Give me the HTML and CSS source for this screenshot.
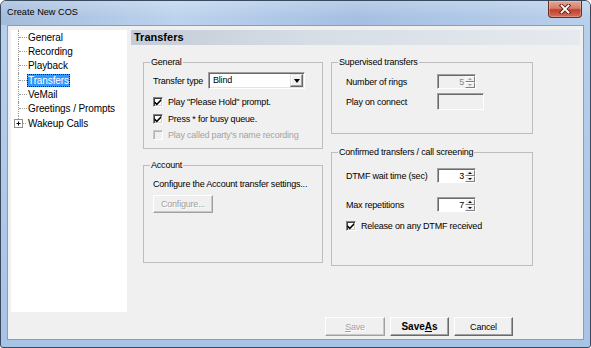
FILE: index.html
```html
<!DOCTYPE html>
<html>
<head>
<meta charset="utf-8">
<title>Create New COS</title>
<link rel="stylesheet" href="styles.css">
</head>
<body>
<div class="window">
  <div class="titlebar">
    <span class="title">Create New COS</span>
    <span class="close">
      <svg width="14" height="10" viewBox="0 0 14 10"><path d="M3.5 1.5 L10.5 8.5 M10.5 1.5 L3.5 8.5" stroke="#5a1f18" stroke-width="3.6" stroke-linecap="square"/><path d="M3.5 1.5 L10.5 8.5 M10.5 1.5 L3.5 8.5" stroke="#fff" stroke-width="1.8" stroke-linecap="square"/></svg>
    </span>
  </div>
  <div class="client">
    <div class="tree">
      <div class="node"><span class="conn"></span><span class="label">General</span></div>
      <div class="node"><span class="conn"></span><span class="label">Recording</span></div>
      <div class="node"><span class="conn"></span><span class="label">Playback</span></div>
      <div class="node"><span class="conn"></span><span class="label selected">Transfers</span></div>
      <div class="node"><span class="conn"></span><span class="label">VeMail</span></div>
      <div class="node"><span class="conn"></span><span class="label">Greetings / Prompts</span></div>
      <div class="node">
        <svg class="conn-last" width="16" height="14" viewBox="0 0 16 14">
          <path d="M7.5 0 V3" stroke="#a0a0a0" stroke-dasharray="1 1"/>
          <rect x="3.5" y="3.5" width="8" height="8" fill="#fff" stroke="#919191"/>
          <path d="M5.5 7.5 H9.5 M7.5 5.5 V9.5" stroke="#000"/>
          <path d="M12 7.5 H16" stroke="#a0a0a0" stroke-dasharray="1 1"/>
        </svg><span class="label">Wakeup Calls</span></div>
    </div>
    <div class="pane">
      <div class="header">Transfers</div>
      <div class="groups">
        <div class="col">
          <fieldset class="group g-general">
            <legend>General</legend>
            <div class="gbody gb-general">
              <div class="row-select">
                <span class="lbl-type">Transfer type</span>
                <div class="select"><span class="sel-text">Blind</span><span class="drop"><span class="tri-down-big"></span></span></div>
              </div>
              <div class="check-row">
                <span class="cbox"><svg width="8" height="8" viewBox="0 0 8 8"><polygon points="0.5,3 2.8,5.2 7.2,0.8 7.2,3 2.8,7.4 0.5,5.2" fill="#000"/></svg></span>
                <span>Play "Please Hold" prompt.</span>
              </div>
              <div class="check-row">
                <span class="cbox"><svg width="8" height="8" viewBox="0 0 8 8"><polygon points="0.5,3 2.8,5.2 7.2,0.8 7.2,3 2.8,7.4 0.5,5.2" fill="#000"/></svg></span>
                <span>Press * for busy queue.</span>
              </div>
              <div class="check-row disabled">
                <span class="cbox"></span>
                <span>Play called party's name recording</span>
              </div>
            </div>
          </fieldset>
          <fieldset class="group g-account">
            <legend>Account</legend>
            <div class="gbody gb-account">
              <div class="line">Configure the Account transfer settings...</div>
              <span class="btn btn-config disabled">Configure...</span>
            </div>
          </fieldset>
        </div>
        <div class="col">
          <fieldset class="group g-super">
            <legend>Supervised transfers</legend>
            <div class="gbody gb-super">
              <div class="field-row">
                <span class="flabel">Number of rings</span>
                <div class="spin disabled"><span class="val">5</span><span class="arrows"><span class="sb"><span class="tri-up"></span></span><span class="sb"><span class="tri-down"></span></span></span></div>
              </div>
              <div class="field-row r2">
                <span class="flabel">Play on connect</span>
                <div class="textbox disabled"></div>
              </div>
            </div>
          </fieldset>
          <fieldset class="group g-confirm">
            <legend>Confirmed transfers / call screening</legend>
            <div class="gbody gb-confirm">
              <div class="field-row">
                <span class="flabel">DTMF wait time (sec)</span>
                <div class="spin"><span class="val">3</span><span class="arrows"><span class="sb"><span class="tri-up"></span></span><span class="sb"><span class="tri-down"></span></span></span></div>
              </div>
              <div class="field-row r3">
                <span class="flabel">Max repetitions</span>
                <div class="spin"><span class="val">7</span><span class="arrows"><span class="sb"><span class="tri-up"></span></span><span class="sb"><span class="tri-down"></span></span></span></div>
              </div>
              <div class="check-row release">
                <span class="cbox"><svg width="8" height="8" viewBox="0 0 8 8"><polygon points="0.5,3 2.8,5.2 7.2,0.8 7.2,3 2.8,7.4 0.5,5.2" fill="#000"/></svg></span>
                <span>Release on any DTMF received</span>
              </div>
            </div>
          </fieldset>
        </div>
      </div>
      <div class="buttons">
        <span class="btn btn-save disabled"><u>S</u>ave</span>
        <span class="btn btn-saveas">Save<u>A</u>s</span>
        <span class="btn btn-cancel">Cancel</span>
      </div>
    </div>
  </div>
</div>
</body>
</html>
```

FILE: styles.css
```css
html, body {
  margin: 0;
  padding: 0;
}
body {
  width: 591px;
  height: 348px;
  overflow: hidden;
  font-family: "Liberation Sans", Arial, sans-serif;
  font-size: 9px;
  letter-spacing: -0.2px;
  color: #000;
  background: #fff;
}
.window {
  width: 591px;
  height: 348px;
  box-sizing: border-box;
  border: 1px solid #3a4a5e;
  border-radius: 6px 6px 3px 3px;
  background: linear-gradient(to bottom, #b9d0ec, #a7c3e6);
  display: flex;
  flex-direction: column;
  overflow: hidden;
}
.titlebar {
  height: 24px;
  flex: none;
  display: flex;
  align-items: flex-start;
  justify-content: space-between;
  background:
    linear-gradient(to bottom, rgba(255,255,255,0.22), rgba(255,255,255,0) 70%),
    linear-gradient(to right, #a3bcdb 0%, #bcd3ee 30%, #a6c0e2 60%, #b9d0eb 100%);
}
.title {
  margin: 5px 0 0 6px;
  font-size: 9.2px;
  letter-spacing: 0;
  line-height: 12px;
  color: #000;
}
.close {
  width: 34px;
  height: 17px;
  margin-right: 8px;
  box-sizing: border-box;
  border: 1px solid #6b2a22;
  border-top: none;
  border-radius: 0 0 4px 4px;
  background: linear-gradient(to bottom, #e7a594 0%, #d4806c 45%, #c0402e 55%, #d2705a 100%);
  display: flex;
  align-items: center;
  justify-content: center;
  box-shadow: inset 0 0 0 1px rgba(255,255,255,0.25);
}
.client {
  margin: 0 6px;
  height: 315px;
  flex: none;
  box-sizing: border-box;
  border: 1px solid #8d9db1;
  background: #f0f0f0;
  display: flex;
  gap: 4px;
  padding: 4px 3px 3px 3px;
}
.tree {
  width: 116px;
  height: 282px;
  flex: none;
  background: #fff;
  font-size: 10px;
  letter-spacing: -0.1px;
}
.node {
  height: 14.33px;
  display: flex;
  align-items: stretch;
  white-space: nowrap;
}
.conn {
  width: 8px;
  margin-left: 7px;
  border-left: 1px dotted #9a9a9a;
  display: flex;
  align-items: center;
}
.conn::after {
  content: "";
  width: 8px;
  border-top: 1px dotted #9a9a9a;
}
.conn-last {
  flex: none;
  align-self: center;
}
.label {
  align-self: center;
  padding: 0 1px;
  line-height: 13px;
  height: 13px;
}
.label.selected {
  background: #3399ff;
  color: #fff;
  outline: 1px dotted #1a1a1a;
  outline-offset: -1px;
}
.pane {
  flex: 1;
  min-width: 0;
  display: flex;
  flex-direction: column;
}
.header {
  height: 15px;
  line-height: 15px;
  padding-left: 3px;
  font-size: 11px;
  font-weight: bold;
  letter-spacing: 0;
  background: linear-gradient(to right, #c3ccd7 0%, #d6dde5 40%, #e6eaee 100%);
}
.groups {
  display: grid;
  grid-template-columns: 180px 202px;
  column-gap: 8px;
  margin: 12px 0 0 12px;
  align-items: start;
}
.col {
  display: flex;
  flex-direction: column;
}
.group {
  margin: 0;
  padding: 0;
  min-width: 0;
  box-sizing: border-box;
  border: 1px solid #bdbdbd;
}
.group legend {
  margin-left: 6px;
  padding: 0 1px;
  line-height: 11px;
  height: 11px;
}
.g-general { height: 92px; }
.g-account { height: 103px; margin-top: 11px; }
.g-super { height: 77px; }
.g-confirm { height: 119px; margin-top: 13px; }
.gbody {
  display: flex;
  flex-direction: column;
  align-items: flex-start;
}
.gb-general { padding: 4px 0 0 9px; }
.gb-account { padding: 8px 0 0 9px; }
.gb-super { padding: 6px 0 0 14px; }
.gb-confirm { padding: 10px 0 0 14px; }
.row-select {
  display: flex;
  align-items: center;
  height: 17px;
}
.lbl-type { width: 55px; }
.select {
  width: 97px;
  height: 17px;
  box-sizing: border-box;
  border: 1px solid;
  border-color: #a0a0a0 #fff #fff #a0a0a0;
  box-shadow: inset 1px 1px #696969, inset -1px -1px #e3e3e3;
  background: #fff;
  display: flex;
  padding: 1px;
}
.sel-text {
  flex: 1;
  padding-left: 3px;
  line-height: 13px;
}
.drop {
  width: 13px;
  box-sizing: border-box;
  border: 1px solid;
  border-color: #e3e3e3 #696969 #696969 #e3e3e3;
  box-shadow: inset -1px -1px #a0a0a0, inset 1px 1px #fff;
  background: #f0f0f0;
  display: flex;
  align-items: center;
  justify-content: center;
}
.tri-down-big {
  width: 0;
  height: 0;
  border-left: 3.5px solid transparent;
  border-right: 3.5px solid transparent;
  border-top: 4px solid #000;
}
.check-row {
  display: flex;
  align-items: center;
  height: 16.5px;
  white-space: nowrap;
}
.row-select + .check-row { margin-top: 5px; }
.cbox {
  width: 10px;
  height: 10px;
  box-sizing: border-box;
  border: 1px solid;
  border-color: #808080 #fff #fff #808080;
  box-shadow: inset 1px 1px #404040, inset -1px -1px #d4d0c8;
  background: #fff;
  margin-right: 5px;
  display: flex;
  align-items: center;
  justify-content: center;
  flex: none;
}
.check-row.disabled { color: #a3a3a3; }
.check-row.disabled .cbox {
  background: #f0f0f0;
  border-color: #c8c8c8 #fff #fff #c8c8c8;
  box-shadow: inset 1px 1px #b4b4b4;
}
.check-row.release {
  height: 14px;
  margin-top: 7px;
}
.line {
  line-height: 11px;
  white-space: nowrap;
}
.btn {
  height: 19px;
  box-sizing: border-box;
  border: 1px solid;
  border-color: #fff #696969 #696969 #fff;
  box-shadow: inset -1px -1px #a0a0a0;
  background: #f0f0f0;
  display: flex;
  align-items: center;
  justify-content: center;
  white-space: nowrap;
}
.btn.disabled {
  color: #a0a0a0;
  text-shadow: 1px 1px #fff;
  border-color: #fff #a0a0a0 #a0a0a0 #fff;
  box-shadow: inset -1px -1px #c8c8c8;
}
.btn-config {
  width: 60px;
  height: 18px;
  margin-top: 5px;
}
.field-row {
  display: flex;
  align-items: center;
  white-space: nowrap;
}
.field-row.r2 { margin-top: 4px; }
.field-row.r3 { margin-top: 14px; }
.flabel { width: 91px; }
.spin {
  width: 39px;
  height: 15px;
  box-sizing: border-box;
  border: 1px solid;
  border-color: #a0a0a0 #fff #fff #a0a0a0;
  box-shadow: inset 1px 1px #696969;
  background: #fff;
  display: flex;
  padding: 1px 0 0 1px;
}
.spin.disabled { background: #f0f0f0; color: #8a8a8a; }
.val {
  flex: 1;
  text-align: right;
  padding-right: 1px;
  line-height: 12px;
}
.arrows {
  width: 10px;
  display: flex;
  flex-direction: column;
}
.sb {
  flex: 1;
  box-sizing: border-box;
  border: 1px solid;
  border-color: #fff #808080 #808080 #fff;
  background: #f0f0f0;
  display: flex;
  align-items: center;
  justify-content: center;
}
.tri-up {
  width: 0;
  height: 0;
  border-left: 2px solid transparent;
  border-right: 2px solid transparent;
  border-bottom: 2px solid #000;
}
.tri-down {
  width: 0;
  height: 0;
  border-left: 2px solid transparent;
  border-right: 2px solid transparent;
  border-top: 2px solid #000;
}
.spin.disabled .tri-up { border-bottom-color: #a0a0a0; }
.spin.disabled .tri-down { border-top-color: #a0a0a0; }
.textbox {
  width: 47px;
  height: 17px;
  box-sizing: border-box;
  border: 1px solid;
  border-color: #a0a0a0 #fff #fff #a0a0a0;
  box-shadow: inset 1px 1px #696969;
  background: #fff;
}
.textbox.disabled { background: #f0f0f0; }
.buttons {
  margin-top: auto;
  display: flex;
  justify-content: flex-end;
  gap: 5px;
  padding-right: 67px;
}
.btn-save { width: 60px; }
.btn-saveas {
  width: 59px;
  font-weight: bold;
  font-size: 10px;
  letter-spacing: 0;
}
.btn-cancel { width: 59px; }
```
